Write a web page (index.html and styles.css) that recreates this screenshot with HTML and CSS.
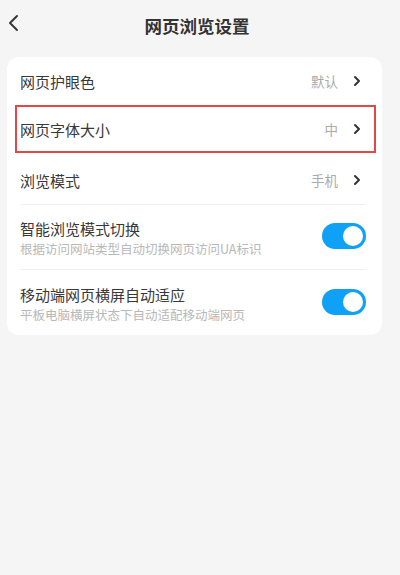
FILE: index.html
```html
<!DOCTYPE html>
<html lang="zh-CN">
<head>
<meta charset="UTF-8" />
<meta name="viewport" content="width=device-width, initial-scale=1" />
<title>网页浏览设置</title>
<link rel="stylesheet" href="styles.css">
</head>
<body>

<header class="topbar">
  <button class="voltar" aria-label="返回">
    <svg width="14" height="18" viewBox="0 0 14 18"><path d="M10 2 L3 9 L10 16" fill="none" stroke="#333" stroke-width="1.9" stroke-linecap="round" stroke-linejoin="round"/></svg>
  </button>
  <h1>网页浏览设置</h1>
</header>

<div class="card">
  <div class="linha">
    <span class="titulo">网页护眼色</span>
    <span class="valor">默认</span>
    <svg class="seta" width="8" height="12" viewBox="0 0 8 12"><path d="M2 2 L6 6 L2 10" fill="none" stroke="#333" stroke-width="2" stroke-linecap="round" stroke-linejoin="round"/></svg>
  </div>

  <div class="linha destaque">
    <span class="titulo">网页字体大小</span>
    <span class="valor">中</span>
    <svg class="seta" width="8" height="12" viewBox="0 0 8 12"><path d="M2 2 L6 6 L2 10" fill="none" stroke="#333" stroke-width="2" stroke-linecap="round" stroke-linejoin="round"/></svg>
  </div>

  <div class="linha modo com-divisor">
    <span class="titulo">浏览模式</span>
    <span class="valor">手机</span>
    <svg class="seta" width="8" height="12" viewBox="0 0 8 12"><path d="M2 2 L6 6 L2 10" fill="none" stroke="#333" stroke-width="2" stroke-linecap="round" stroke-linejoin="round"/></svg>
  </div>

  <div class="linha dupla com-divisor">
    <div class="textos">
      <span class="titulo">智能浏览模式切换</span>
      <span class="sub">根据访问网站类型自动切换网页访问UA标识</span>
    </div>
    <span class="toggle on"></span>
  </div>

  <div class="linha dupla">
    <div class="textos">
      <span class="titulo">移动端网页横屏自动适应</span>
      <span class="sub">平板电脑横屏状态下自动适配移动端网页</span>
    </div>
    <span class="toggle on"></span>
  </div>
</div>

</body>
</html>
```

FILE: styles.css
```css
/* BASE */
* {
  box-sizing: border-box;
}
body {
  margin: 0;
  background: #f5f5f5;
  font-family: "Noto Sans CJK SC", "Noto Sans", sans-serif;
  color: #333;
  width: 400px;
  min-height: 575px;
}

/* TOPO */
.topbar {
  position: relative;
  height: 57px;
  display: flex;
  align-items: center;
  justify-content: center;
  padding-bottom: 7px;
}
.topbar h1 {
  margin: 0;
  font-size: 17.5px;
  font-weight: 700;
  color: #333;
  margin-left: -6px;
}
.voltar {
  position: absolute;
  left: 7px;
  top: 14px;
  background: none;
  border: none;
  padding: 0;
  display: flex;
}

/* CARTÃO */
.card {
  margin: 0 18px 0 7px;
  background: #fff;
  border-radius: 12px;
  padding: 0 16px 0 13px;
}
.linha {
  display: flex;
  align-items: center;
  height: 48px;
  font-size: 15px;
}
.linha .titulo {
  flex: 1;
  color: #383838;
}
.valor {
  font-size: 13.5px;
  color: #aaa;
  margin-right: 15px;
}
.seta {
  margin-right: 5px;
}
.destaque {
  border: 2px solid #e24848;
  margin: 0 -10px 0 -5px;
  padding: 0 8px 0 3px;
}
.com-divisor {
  border-bottom: 1px solid #f0f0f0;
}
.modo {
  height: 52px;
  padding-top: 3px;
}

/* LINHAS COM SUBTÍTULO */
.dupla {
  height: 65px;
  padding-top: 3px;
}
.textos {
  flex: 1;
  display: flex;
  flex-direction: column;
}
.textos .titulo {
  line-height: 20px;
}
.sub {
  font-size: 12.5px;
  color: #b8b8b8;
  line-height: 18px;
  margin-top: 1px;
}

/* INTERRUPTOR */
.toggle {
  width: 44px;
  height: 26px;
  border-radius: 13px;
  background: #ccc;
  position: relative;
  flex-shrink: 0;
  margin-top: -5px;
}
.toggle::after {
  content: "";
  position: absolute;
  top: 3px;
  left: 3px;
  width: 20px;
  height: 20px;
  border-radius: 50%;
  background: #fff;
}
.toggle.on {
  background: #0fa0f7;
}
.toggle.on::after {
  left: 21px;
}
```
